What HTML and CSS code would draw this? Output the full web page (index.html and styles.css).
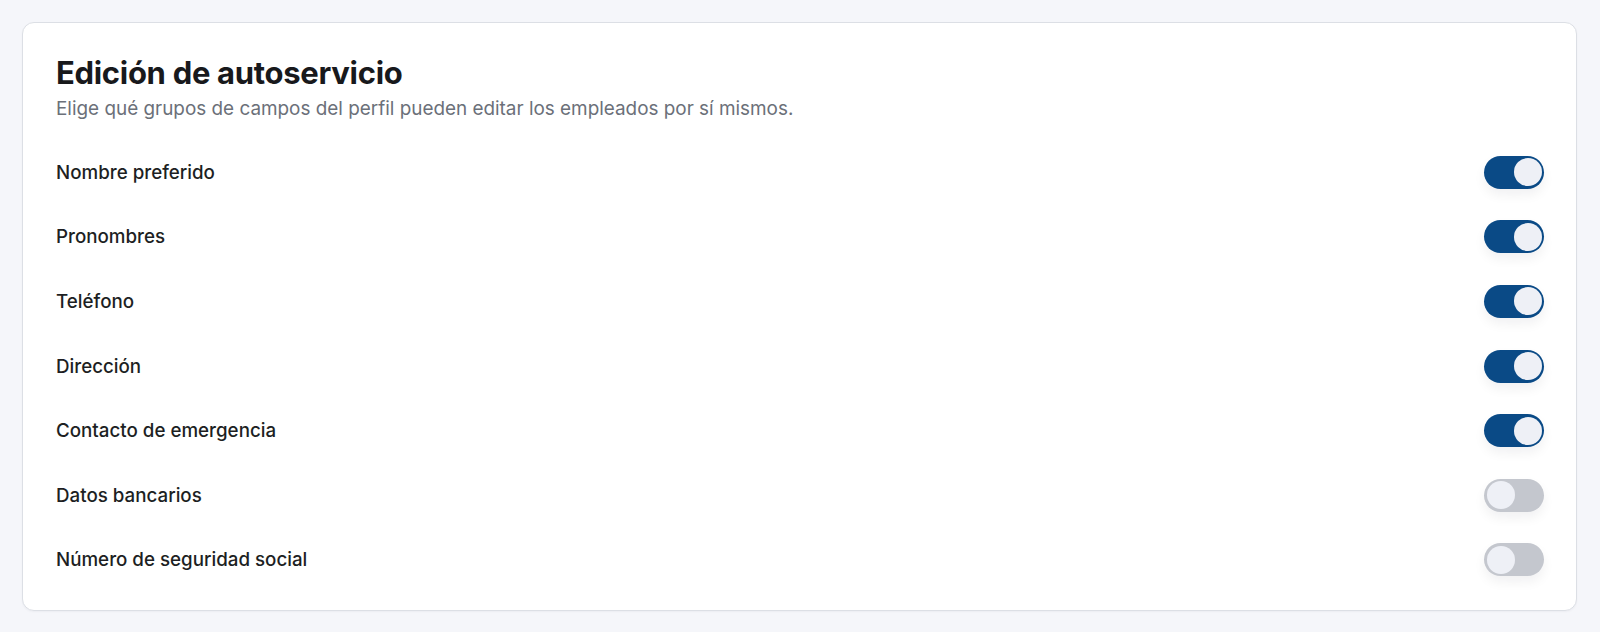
FILE: index.html
```html
<!DOCTYPE html>
<html lang="es">
<head>
<meta charset="utf-8">
<title>Edición de autoservicio</title>
<link rel="stylesheet" href="styles.css">
</head>
<body>
<main class="page">
  <section class="card">
    <header class="card-head">
      <h1 class="title">Edición de autoservicio</h1>
      <p class="subtitle">Elige qué grupos de campos del perfil pueden editar los empleados por sí mismos.</p>
    </header>
    <ul class="rows">
      <li class="row"><span class="label">Nombre preferido</span><span class="toggle on" role="switch" aria-checked="true"><span class="knob"></span></span></li>
      <li class="row"><span class="label">Pronombres</span><span class="toggle on" role="switch" aria-checked="true"><span class="knob"></span></span></li>
      <li class="row"><span class="label">Teléfono</span><span class="toggle on" role="switch" aria-checked="true"><span class="knob"></span></span></li>
      <li class="row"><span class="label">Dirección</span><span class="toggle on" role="switch" aria-checked="true"><span class="knob"></span></span></li>
      <li class="row"><span class="label">Contacto de emergencia</span><span class="toggle on" role="switch" aria-checked="true"><span class="knob"></span></span></li>
      <li class="row"><span class="label">Datos bancarios</span><span class="toggle" role="switch" aria-checked="false"><span class="knob"></span></span></li>
      <li class="row"><span class="label">Número de seguridad social</span><span class="toggle" role="switch" aria-checked="false"><span class="knob"></span></span></li>
    </ul>
  </section>
</main>
</body>
</html>
```
FILE: styles.css
```css
* { box-sizing: border-box; }
html, body { margin: 0; padding: 0; }
body {
  background: #f5f6fa;
  font-family: Inter, "Noto Sans", sans-serif;
  color: #1b1d21;
}
.page {
  padding: 22px 23px 24px 22px;
}
.card {
  background: #ffffff;
  border: 1px solid #dcdfe5;
  border-radius: 12px;
  padding: 32px 32px 18px 33px;
  box-shadow: 0 1px 2px rgba(16, 24, 40, 0.04);
}
.card-head {
  margin-bottom: 19px;
}
.title {
  margin: 0;
  font-size: 31px;
  line-height: 36px;
  font-weight: 700;
  letter-spacing: -0.3px;
  color: #18191c;
}
.subtitle {
  margin: 6px 0 0;
  font-size: 18.9px;
  line-height: 24px;
  color: #6b7079;
}
.rows {
  list-style: none;
  margin: 0;
  padding: 0;
}
.row {
  display: flex;
  align-items: center;
  justify-content: space-between;
  height: 64.6px;
}
.label {
  font-size: 18.75px;
  font-weight: 500;
  color: #1d1f23;
}
.toggle {
  display: flex;
  align-items: center;
  width: 60px;
  height: 33px;
  padding: 2.5px;
  border-radius: 999px;
  background: #c4c7ce;
  box-shadow: 0 6px 12px rgba(16, 24, 40, 0.06);
}
.toggle.on {
  background: #0a4a86;
  justify-content: flex-end;
}
.knob {
  width: 28px;
  height: 28px;
  border-radius: 50%;
  background: #eef0f6;
}
```
